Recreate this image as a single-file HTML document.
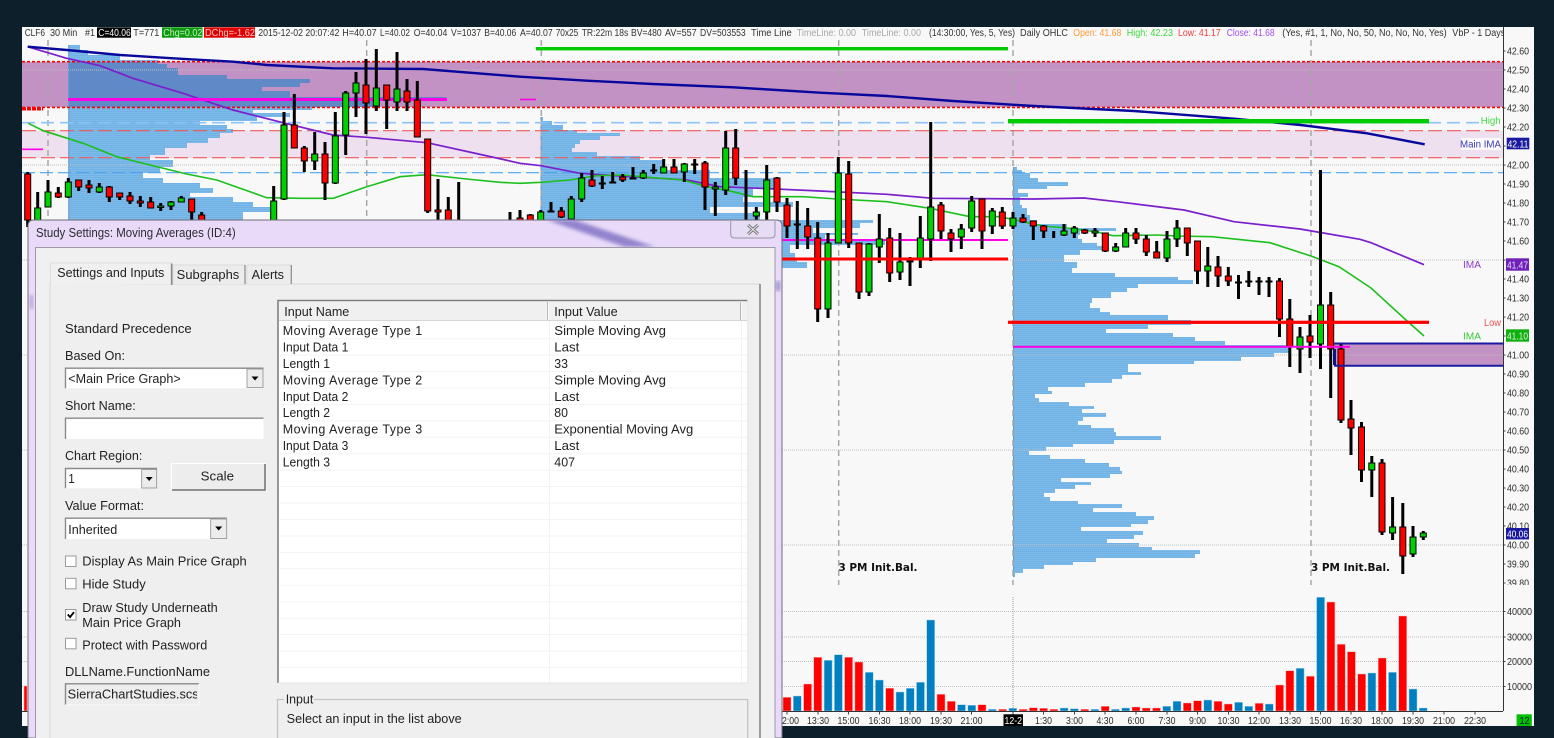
<!DOCTYPE html>
<html><head><meta charset="utf-8"><title>Study Settings</title>
<style>
html,body{margin:0;padding:0;background:#0e1f2c;width:1554px;height:738px;overflow:hidden}
svg{display:block;filter:blur(.35px)}
text{font-family:"Liberation Sans",sans-serif}
.h{font-size:10px;fill:#333}
.a{font-size:10px;fill:#2b2b2b}
.d{font-size:12.5px;fill:#222}
.b{font-family:"DejaVu Sans","Liberation Sans",sans-serif;font-size:11px;font-weight:bold;fill:#111}
</style></head><body>
<svg width="1554" height="738" viewBox="0 0 1554 738" xmlns="http://www.w3.org/2000/svg">
<defs>
<pattern id="st" width="4" height="2" patternUnits="userSpaceOnUse"><rect width="4" height="2" fill="#7dbbea"/><rect y="1" width="4" height="1" fill="#72b1e3"/></pattern>
<clipPath id="z"><rect x="22" y="62" width="1481" height="45"/></clipPath>
<clipPath id="h1"><rect x="22" y="27" width="1481" height="11"/></clipPath>
<clipPath id="sc"><rect x="66" y="684" width="131" height="20"/></clipPath>
<filter id="bl"><feGaussianBlur stdDeviation="1.8"/></filter>
</defs>
<rect width="1554" height="738" fill="#0e1f2c"/>
<rect x="22" y="27" width="1512" height="699" fill="#f8f8f8"/>

<!-- zones -->
<rect x="22" y="62" width="1481" height="45" fill="#c392c4"/>
<rect x="22" y="131" width="1481" height="27" fill="#eee0ee"/>
<rect x="1334" y="344" width="169" height="22" fill="#c392c4"/>

<!-- volume profiles -->
<path id="p0" fill="url(#st)" d="M68.7 45H80V50H88V55H120V60H158V64H167V68H178V75H227V79H310V83H300V87H262V91H290V97H446V101H377V107H312V110H253V113H290V117H257V121H200V125H227V129H233V133H220V138H208V143H187V148H165V155H150V160H173V167H160V173H143V178H163V183H200V188H213V193H190V197H233V202H253V207H270V212H243V226H68.7Z"/>
<path clip-path="url(#z)" fill="#6089c8" d="M68.7 45H80V50H88V55H120V60H158V64H167V68H178V75H227V79H310V83H300V87H262V91H290V97H446V101H377V107H68.7Z"/>
<path fill="url(#st)" d="M541 117H543V121H552V125H563V130H577V133H620V136H600V140H580V144H575V148H572V152H597V156H640V160H665V170H710V178H780V188H753V197H743V202H793V207H710V213H760V220H873V223H860V228H813V233H858V235H825V240H885V245H790V253H795V258H797V262H807V268H541Z"/>
<path fill="url(#st)" d="M1013.5 167H1017V170H1022V173H1030V178H1038V182H1068V186H1047V189H1018V193H1028V197H1020V205H1022V208H1027V215H1030V220H1037V224H1067V228H1116V231H1080V235H1078V239H1082V243H1097V246H1103V250H1080V255H1064V262H1077V268H1072V273H1115V277H1178V280H1193V284H1138V288H1127V292H1111V298H1092V303H1090V308H1100V312H1110V315H1168V320H1191V325H1148V329H1106V333H1173V337H1195V341H1225V345H1290V353H1274V357H1241V361H1194V364H1128V372H1141V375H1122V379H1112V383H1085V387H1048V391H1052V394H1035V398H1039V402H1069V406H1094V409H1082V413H1106V417H1083V421H1078V425H1091V428H1114V432H1116V436H1161V440H1114V444H1073V447H1046V451H1029V455H1050V459H1085V463H1109V467H1120V471H1122V474H1110V478H1061V482H1091V485H1075V489H1055V493H1044V497H1050V501H1078V504H1122V508H1093V512H1136V516H1154V520H1148V524H1131V527H1081V531H1143V535H1134V539H1107V543H1139V547H1152V550H1200V554H1195V558H1096V562H1073V565H1044V569H1023V573H1015V577H1013.5Z"/>
<path stroke="#5b9ad2" stroke-width="1" fill="none" d="M68.7 45V226M541 117V268M1013.5 167V577"/>

<!-- grid -->
<path stroke="#c0c0c0" stroke-width="1" stroke-dasharray="1 1" fill="none" d="M22 70H1503M22 165H1503M22 260H1503M22 355H1503M22 450H1503M22 545H1503M22 611.5H1503M22 637H1503M22 661.5H1503M22 686.5H1503"/>
<path stroke="#a8a8a8" stroke-width="1.5" stroke-dasharray="6 4" fill="none" d="M48 40V585M366.7 40V585M541.3 40V585M838.7 40V585M1013 40V585M1311 40V585"/>
<path stroke="#999" stroke-width="1" stroke-dasharray="1 1" fill="none" d="M1013 597V711"/>

<!-- horizontal level lines -->
<path stroke="#f00" stroke-width="1.6" stroke-dasharray="3 2" fill="none" d="M22 61.7H1503M22 107.4H1503"/>
<path stroke="#f00" stroke-width="3.4" stroke-dasharray="4 1" fill="none" d="M22 108.8H43"/>
<path stroke="#8cc3f8" stroke-width="1.6" stroke-dasharray="13 6" fill="none" d="M22 122.7H1480"/>
<path stroke="#4ea4f0" stroke-width="1.1" stroke-dasharray="13 5" fill="none" d="M22 172.7H1503"/>
<path stroke="#ee5a5a" stroke-width="1.1" stroke-dasharray="14 5" fill="none" d="M22 130.7H1503M22 157.7H1503"/>
<path stroke="#ff00e6" stroke-width="1.6" fill="none" d="M22 149.3H43"/>

<!-- curves -->
<polyline fill="none" stroke="#7a1fcc" stroke-width="1.7" points="27.7,46.7 66.7,58.3 100,65.7 133,78.3 183,93.3 233,110 283,122.7 333,135 367,137.3 427,142.7 483,155 520,163.3 541,165.7 580,173.3 620,176 660,178.3 687,180 720,186.7 760,188.3 820,191 887,194.3 933,198.3 1034,199 1084,198 1117,201.7 1184,210 1234,221.7 1300,229 1360,239.3 1371,242.7 1424,264.7"/>
<polyline fill="none" stroke="#1cc01c" stroke-width="1.6" points="28.3,123.3 43.3,130.7 83.3,143.3 116.7,156.7 150,165 186.7,174 216.7,180 250,191.7 266.7,197.7 300,198.3 333.3,198.3 366.7,186.7 400,176.7 426.7,174.7 466.7,179 500,182.3 520,183.3 541,182.3 570,180 596.7,175.7 623,175 653,177.7 683,180 707,186.7 733,191.7 753,196.7 803,196.7 837,199 887,201.7 930,208.3 970,216.7 1000,216.7 1043,226 1067,228 1097,232 1113,235.7 1157,235 1177,236 1212,236.7 1270,242.7 1311,256 1339,266.7 1371,288 1406,320 1424,336"/>
<polyline fill="none" stroke="#08089c" stroke-width="2.4" points="27.7,46.7 66.7,50 120,55 173,58.3 233,61.7 267,65 333,68.3 423,69 520,76.7 587,80.7 653,84 733,87.3 820,92.7 887,96 953,101 1034,106 1134,111 1234,118.7 1300.7,125 1367,133.3 1424.7,144.3"/>

<!-- horizontal thick lines under candles -->
<rect x="536" y="47" width="472" height="3.4" fill="#00cc00"/>
<rect x="68" y="98" width="379" height="3" fill="#ff00e6"/>
<rect x="520" y="98.7" width="16" height="1.6" fill="#ff00e6"/>
<rect x="1008" y="119" width="421" height="4.4" fill="#00cc00"/>
<rect x="782" y="239" width="226" height="2" fill="#ff00e6"/>

<!-- wicks -->
<path stroke="#000" stroke-width="3" fill="none" d="M27.7 172V227M37.7 192V226M48 180V207M58.3 187V198M68.3 178V198M78.7 180V191M89 180V193M99.3 183V193M109.3 186V202M119.7 193V200M130 192V204M140.3 196V207M150.7 197V208M160.7 203V211M171 201V210M181.3 196V202M191.7 199V226M201.7 212V226M273.7 186V226M284 112V200M294.3 94V148M304.3 146V172M314.7 132V170M325 142V200M335.3 112V184M345.7 91V155M356 72V117M366 59V134M376.3 49V111M386.7 85V129M397 52V111M407 79V111M417.3 81V137M427.7 139V213M438 179V226M448.3 197V226M458.7 182V226M510 212V226M520 210V226M530.3 214V226M540.7 210V226M551 202V212M561.3 207V218M571.3 196V226M581.7 173V202M592 170V187M602.3 176V189M612.7 172V183M622.7 174V182M633 167V179M643.3 170V179M653.7 164V174M663.7 159V173M674 159V173M684.3 163V182M694.7 159V174M705 161V210M715.3 182V216M725.7 131V195M735.7 129V185M746 170V226M756.3 207V226M766.7 165V226M777 177V212M787 198V238M797.3 201V249M807.7 208V249M817.7 222V322M828 233V318M838.3 157V243M848.7 161V248M859 243V299M869 243V296M879.3 214V263M889.7 228V282M900 233V280M910 257V286M920.3 216V268M930.7 122V261M941 202V239M951 229V252M961.3 224V249M971.7 196V232M982 199V249M992.3 208V234M1002.3 207V229M1013 212V229M1023 214V223M1033.3 221V240M1043.7 225V238M1053.7 231V238M1064 224V236M1074.3 226V238M1084.7 229V234M1095 228V237M1105.3 233V252M1115.7 243V252M1125.7 228V247M1136 228V244M1146.3 235V256M1156.7 241V258M1167 231V262M1177 220V247M1187.3 228V256M1197.5 241V284M1207.8 247V287M1218 256V287M1228.3 267V286M1238.5 275V299M1248.8 271V287M1259 277V295M1269 277V297M1279.5 278V337M1289.8 299V367M1300 327V373M1310 315V358M1320.5 170V369M1330.7 292V398M1341 343V423M1351 400V455M1361.5 422V482M1371.8 456V497M1382 459V535M1392.6 497V540M1402.8 503V574M1413 526V557M1423.3 531V540"/>
<!-- red bodies -->
<path fill="#f00" stroke="#000" stroke-width="1" d="M24.7 174h6V220h-6zM55.3 193h6V197h-6zM75.7 180h6V187h-6zM86 185h6V188h-6zM106.3 187h6V197h-6zM116.7 193h6V197h-6zM127 196h6V201h-6zM137.3 201h6V203h-6zM147.7 202h6V208h-6zM188.7 199h6V212h-6zM198.7 215h6V226h-6zM291.3 125h6V148h-6zM301.3 148h6V161h-6zM322 154h6V183h-6zM363 85h6V103h-6zM383.7 85h6V100h-6zM404 91h6V102h-6zM414.3 100h6V137h-6zM424.7 139h6V211h-6zM435 210h6V212h-6zM445.3 210h6V226h-6zM517 218h6V226h-6zM527.3 215h6V226h-6zM558.3 211h6V217h-6zM589 180h6V186h-6zM619.7 177h6V180h-6zM671 167h6V173h-6zM702 163h6V187h-6zM732.7 148h6V178h-6zM774 178h6V202h-6zM784 205h6V226h-6zM804.7 226h6V237h-6zM814.7 238h6V309h-6zM845.7 174h6V243h-6zM856 243h6V292h-6zM886.7 238h6V273h-6zM938 205h6V231h-6zM948 233h6V239h-6zM979 199h6V231h-6zM999.3 212h6V226h-6zM1020 218h6V222h-6zM1030.3 221h6V226h-6zM1040.7 226h6V231h-6zM1081.7 230h6V233h-6zM1102.3 233h6V251h-6zM1133 233h6V239h-6zM1143.3 239h6V252h-6zM1153.7 252h6V258h-6zM1184.3 228h6V243h-6zM1194.5 241h6V271h-6zM1215 267h6V276h-6zM1225.3 276h6V281h-6zM1276.5 281h6V319h-6zM1286.8 319h6V347h-6zM1307 336h6V342h-6zM1327.7 305h6V349h-6zM1338 349h6V420h-6zM1348 419h6V428h-6zM1358.5 427h6V470h-6zM1379 463h6V532h-6zM1399.8 527h6V556h-6z"/>
<!-- green bodies -->
<path fill="#00d000" stroke="#000" stroke-width="1" d="M34.7 208h6V226h-6zM45 192h6V207h-6zM65.3 182h6V197h-6zM96.3 187h6V192h-6zM157.7 206h6V207.5h-6zM168 202h6V206h-6zM178.3 198h6V202h-6zM270.7 201h6V226h-6zM281 125h6V199h-6zM311.7 154h6V161h-6zM332.3 136h6V183h-6zM342.7 93h6V135h-6zM353 83h6V93h-6zM373.3 88h6V106h-6zM394 89h6V102h-6zM537.7 212h6V226h-6zM568.3 199h6V219h-6zM578.7 178h6V199h-6zM640.3 173h6V178h-6zM660.7 167h6V173h-6zM681.3 164h6V172h-6zM753.3 212h6V216h-6zM763.7 180h6V212h-6zM712.3 187h6V189h-6zM722.7 148h6V190h-6zM825 243h6V309h-6zM835.3 173h6V243h-6zM866 244h6V292h-6zM876.3 239h6V247h-6zM897 262h6V272h-6zM917.3 238h6V258h-6zM927.7 207h6V239h-6zM958.3 229h6V237h-6zM968.7 201h6V228h-6zM989.3 211h6V226h-6zM1010 218h6V226h-6zM1061 231h6V235h-6zM1071.3 228h6V233h-6zM1092 231h6V233h-6zM1112.7 247h6V251h-6zM1122.7 233h6V247h-6zM1164 239h6V258h-6zM1174 228h6V239h-6zM1204.8 266h6V271h-6zM1297 337h6V349h-6zM1317.5 305h6V344h-6zM1368.8 463h6V470h-6zM1389.6 527h6V533h-6zM1410 537h6V554h-6zM1420.3 533h6V537h-6zM548 211h6V212h-6zM599.3 183h6V184h-6zM609.7 182h6V183h-6zM630 178h6V179h-6zM650.7 170h6V171h-6zM691.7 164h6V165h-6zM794.3 224h6V225h-6zM907 261h6V262h-6zM1235.5 282h6V283h-6zM1245.8 281h6V282h-6zM1256 281h6V282h-6zM1266 281h6V282h-6z"/>

<!-- thick lines above candles -->
<rect x="782" y="257.5" width="226" height="3" fill="#f00"/>
<rect x="1008" y="320.7" width="421" height="3.2" fill="#f00"/>
<rect x="1013" y="345.8" width="337" height="2" fill="#ff00e6"/>
<path stroke="#1a1aa0" stroke-width="2" fill="none" d="M1334 343.5H1503M1334 365.8H1503"/>
<rect x="1333" y="349" width="3" height="16" fill="#10108c"/>

<!-- volume bars -->
<path fill="#f00" stroke="#ffb0b0" stroke-width=".5" d="M24 686h3V711h-3zM783 697.3h8V711h-8zM803.6 684h8V711h-8zM813.8 657.3h8V711h-8zM844.6 657.3h8V711h-8zM854.9 662h8V711h-8zM885.7 688.3h8V711h-8zM937 694.3h8V711h-8zM947.3 701.3h8V711h-8zM978 704.7h8V711h-8zM998.6 709.3h8V711h-8zM1019.1 709.3h8V711h-8zM1029.4 707.7h8V711h-8zM1039.6 708.3h8V711h-8zM1049.9 709.3h8V711h-8zM1080.7 709.3h8V711h-8zM1101.2 706.3h8V711h-8zM1132 707h8V711h-8zM1142.2 708h8V711h-8zM1152.5 708h8V711h-8zM1183.3 703h8V711h-8zM1193.5 700.7h8V711h-8zM1214 701.3h8V711h-8zM1224.3 704h8V711h-8zM1255.1 703.3h8V711h-8zM1275.6 685h8V711h-8zM1285.9 670.7h8V711h-8zM1306.4 676.3h8V711h-8zM1326.9 602h8V711h-8zM1337.2 644.3h8V711h-8zM1347.4 651.7h8V711h-8zM1357.7 674h8V711h-8zM1378.2 658h8V711h-8zM1398.7 616h8V711h-8z"/>
<path fill="#0080c0" stroke="#a8d4ec" stroke-width=".5" d="M793.3 696h8V711h-8zM824.1 660.3h8V711h-8zM834.4 654.7h8V711h-8zM865.2 672.3h8V711h-8zM875.4 680h8V711h-8zM896 692h8V711h-8zM906.2 688.3h8V711h-8zM916.5 682.3h8V711h-8zM926.7 620h8V711h-8zM957.5 704.7h8V711h-8zM967.8 705.3h8V711h-8zM988.3 709.3h8V711h-8zM1008.8 708.3h8V711h-8zM1060.1 708h8V711h-8zM1070.4 708.7h8V711h-8zM1090.9 709.3h8V711h-8zM1111.4 709.3h8V711h-8zM1121.7 708h8V711h-8zM1162.7 706.3h8V711h-8zM1173 701.3h8V711h-8zM1203.8 700h8V711h-8zM1234.6 702.3h8V711h-8zM1244.8 706.3h8V711h-8zM1265.3 704h8V711h-8zM1296.1 668.3h8V711h-8zM1316.6 597.3h8V711h-8zM1367.9 673h8V711h-8zM1388.5 672.3h8V711h-8zM1409 689h8V711h-8zM1419.2 708h8V711h-8z"/>

<!-- axes -->
<path stroke="#333" stroke-width="1" fill="none" d="M1503.5 27V711M22 711.5H1503"/>
<path stroke="#444" stroke-width="1" fill="none" d="M787 711.5v3M818 711.5v3M848.5 711.5v3M879.5 711.5v3M910 711.5v3M941 711.5v3M971.5 711.5v3M1013 711.5v3M1043.5 711.5v3M1074.5 711.5v3M1105 711.5v3M1136 711.5v3M1167 711.5v3M1197.5 711.5v3M1228.5 711.5v3M1259 711.5v3M1290 711.5v3M1320.5 711.5v3M1351 711.5v3M1382 711.5v3M1413 711.5v3M1444 711.5v3M1475 711.5v3M1503.5 51h2M1503.5 70h2M1503.5 89h2M1503.5 108h2M1503.5 127h2M1503.5 146h2M1503.5 165h2M1503.5 184h2M1503.5 203h2M1503.5 222h2M1503.5 241h2M1503.5 260h2M1503.5 279h2M1503.5 298h2M1503.5 317h2M1503.5 336h2M1503.5 355h2M1503.5 374h2M1503.5 393h2M1503.5 412h2M1503.5 431h2M1503.5 450h2M1503.5 469h2M1503.5 488h2M1503.5 507h2M1503.5 526h2M1503.5 545h2M1503.5 564h2M1503.5 583h2M1503.5 611.5h2M1503.5 637h2M1503.5 661.5h2M1503.5 686.5h2"/>
<g class="a" style="font-size:10px">
<text class="a" x="1507" y="54.5" textLength="22" lengthAdjust="spacingAndGlyphs">42.60</text>
<text class="a" x="1507" y="73.5" textLength="22" lengthAdjust="spacingAndGlyphs">42.50</text>
<text class="a" x="1507" y="92.5" textLength="22" lengthAdjust="spacingAndGlyphs">42.40</text>
<text class="a" x="1507" y="111.5" textLength="22" lengthAdjust="spacingAndGlyphs">42.30</text>
<text class="a" x="1507" y="130.5" textLength="22" lengthAdjust="spacingAndGlyphs">42.20</text>
<text class="a" x="1507" y="168.5" textLength="22" lengthAdjust="spacingAndGlyphs">42.00</text>
<text class="a" x="1507" y="187.5" textLength="22" lengthAdjust="spacingAndGlyphs">41.90</text>
<text class="a" x="1507" y="206.5" textLength="22" lengthAdjust="spacingAndGlyphs">41.80</text>
<text class="a" x="1507" y="225.5" textLength="22" lengthAdjust="spacingAndGlyphs">41.70</text>
<text class="a" x="1507" y="244.5" textLength="22" lengthAdjust="spacingAndGlyphs">41.60</text>
<text class="a" x="1507" y="282.5" textLength="22" lengthAdjust="spacingAndGlyphs">41.40</text>
<text class="a" x="1507" y="301.5" textLength="22" lengthAdjust="spacingAndGlyphs">41.30</text>
<text class="a" x="1507" y="320.5" textLength="22" lengthAdjust="spacingAndGlyphs">41.20</text>
<text class="a" x="1507" y="358.5" textLength="22" lengthAdjust="spacingAndGlyphs">41.00</text>
<text class="a" x="1507" y="377.5" textLength="22" lengthAdjust="spacingAndGlyphs">40.90</text>
<text class="a" x="1507" y="396.5" textLength="22" lengthAdjust="spacingAndGlyphs">40.80</text>
<text class="a" x="1507" y="415.5" textLength="22" lengthAdjust="spacingAndGlyphs">40.70</text>
<text class="a" x="1507" y="434.5" textLength="22" lengthAdjust="spacingAndGlyphs">40.60</text>
<text class="a" x="1507" y="453.5" textLength="22" lengthAdjust="spacingAndGlyphs">40.50</text>
<text class="a" x="1507" y="472.5" textLength="22" lengthAdjust="spacingAndGlyphs">40.40</text>
<text class="a" x="1507" y="491.5" textLength="22" lengthAdjust="spacingAndGlyphs">40.30</text>
<text class="a" x="1507" y="510.5" textLength="22" lengthAdjust="spacingAndGlyphs">40.20</text>
<text class="a" x="1507" y="529.5" textLength="22" lengthAdjust="spacingAndGlyphs">40.10</text>
<text class="a" x="1507" y="548.5" textLength="22" lengthAdjust="spacingAndGlyphs">40.00</text>
<text class="a" x="1507" y="567.5" textLength="22" lengthAdjust="spacingAndGlyphs">39.90</text>
<text class="a" x="1507" y="586.5" textLength="22" lengthAdjust="spacingAndGlyphs">39.80</text>
</g>
<rect x="1505" y="585" width="29" height="10" fill="#f8f8f8"/>
<text class="a" x="1507" y="615" textLength="25" lengthAdjust="spacingAndGlyphs">40000</text>
<text class="a" x="1507" y="640.5" textLength="25" lengthAdjust="spacingAndGlyphs">30000</text>
<text class="a" x="1507" y="665" textLength="25" lengthAdjust="spacingAndGlyphs">20000</text>
<text class="a" x="1507" y="690" textLength="25" lengthAdjust="spacingAndGlyphs">10000</text>

<!-- price boxes -->
<rect x="1461" y="138" width="40" height="12" fill="#fff" opacity=".8"/>
<text x="1460" y="147.5" font-size="10.5" fill="#3a3ab4" textLength="41" lengthAdjust="spacingAndGlyphs">Main IMA</text>
<rect x="1506.7" y="137.7" width="22.6" height="11.6" fill="#1a1aa0"/>
<text x="1507.5" y="147.3" font-size="10" fill="#fff" textLength="21" lengthAdjust="spacingAndGlyphs">42.11</text>
<text x="1480.7" y="124" font-size="10.5" fill="#44dd44" textLength="20" lengthAdjust="spacingAndGlyphs">High</text>
<text x="1463" y="268" font-size="10.5" fill="#8a3ad0" textLength="18" lengthAdjust="spacingAndGlyphs">IMA</text>
<rect x="1506" y="258.3" width="23" height="12.4" fill="#7020b8"/>
<text x="1507" y="268.3" font-size="10" fill="#e8dcff" textLength="21" lengthAdjust="spacingAndGlyphs">41.47</text>
<text x="1484" y="326" font-size="10.5" fill="#ee5050" textLength="17" lengthAdjust="spacingAndGlyphs">Low</text>
<text x="1463" y="339.5" font-size="10.5" fill="#38c838" textLength="18" lengthAdjust="spacingAndGlyphs">IMA</text>
<rect x="1506" y="329.3" width="23" height="12.4" fill="#10b010"/>
<text x="1507" y="339.3" font-size="10" fill="#dcf5dc" textLength="21" lengthAdjust="spacingAndGlyphs">41.10</text>
<rect x="1506" y="528" width="23" height="11.4" fill="#1a1aa0"/>
<text x="1507" y="537.5" font-size="10" fill="#fff" textLength="21" lengthAdjust="spacingAndGlyphs">40.06</text>

<text class="b" x="838.5" y="571" textLength="79" lengthAdjust="spacingAndGlyphs">3 PM Init.Bal.</text>
<text class="b" x="1311" y="571" textLength="79" lengthAdjust="spacingAndGlyphs">3 PM Init.Bal.</text>

<!-- time labels -->
<text class="a" x="782" y="724" textLength="17" lengthAdjust="spacingAndGlyphs">2:00</text>
<text class="a" x="807" y="724" textLength="22" lengthAdjust="spacingAndGlyphs">13:30</text>
<text class="a" x="837.5" y="724" textLength="22" lengthAdjust="spacingAndGlyphs">15:00</text>
<text class="a" x="868.5" y="724" textLength="22" lengthAdjust="spacingAndGlyphs">16:30</text>
<text class="a" x="899" y="724" textLength="22" lengthAdjust="spacingAndGlyphs">18:00</text>
<text class="a" x="930" y="724" textLength="22" lengthAdjust="spacingAndGlyphs">19:30</text>
<text class="a" x="960.5" y="724" textLength="22" lengthAdjust="spacingAndGlyphs">21:00</text>
<rect x="1003.5" y="714.3" width="19.5" height="11.7" fill="#000"/>
<text x="1004.5" y="724" font-size="10" fill="#fff" textLength="17.5" lengthAdjust="spacingAndGlyphs">12-2</text>
<text class="a" x="1035" y="724" textLength="17" lengthAdjust="spacingAndGlyphs">1:30</text>
<text class="a" x="1066" y="724" textLength="17" lengthAdjust="spacingAndGlyphs">3:00</text>
<text class="a" x="1096.5" y="724" textLength="17" lengthAdjust="spacingAndGlyphs">4:30</text>
<text class="a" x="1127.5" y="724" textLength="17" lengthAdjust="spacingAndGlyphs">6:00</text>
<text class="a" x="1158.5" y="724" textLength="17" lengthAdjust="spacingAndGlyphs">7:30</text>
<text class="a" x="1189" y="724" textLength="17" lengthAdjust="spacingAndGlyphs">9:00</text>
<text class="a" x="1217.5" y="724" textLength="22" lengthAdjust="spacingAndGlyphs">10:30</text>
<text class="a" x="1248" y="724" textLength="22" lengthAdjust="spacingAndGlyphs">12:00</text>
<text class="a" x="1279" y="724" textLength="22" lengthAdjust="spacingAndGlyphs">13:30</text>
<text class="a" x="1309.5" y="724" textLength="22" lengthAdjust="spacingAndGlyphs">15:00</text>
<text class="a" x="1340" y="724" textLength="22" lengthAdjust="spacingAndGlyphs">16:30</text>
<text class="a" x="1371" y="724" textLength="22" lengthAdjust="spacingAndGlyphs">18:00</text>
<text class="a" x="1402" y="724" textLength="22" lengthAdjust="spacingAndGlyphs">19:30</text>
<text class="a" x="1433" y="724" textLength="22" lengthAdjust="spacingAndGlyphs">21:00</text>
<text class="a" x="1464" y="724" textLength="22" lengthAdjust="spacingAndGlyphs">22:30</text>
<rect x="1516.6" y="714.3" width="15.2" height="11.7" fill="#00c000"/>
<text x="1519.5" y="724" font-size="10" fill="#114" textLength="10" lengthAdjust="spacingAndGlyphs">12</text>

<!-- header -->
<rect x="22" y="27" width="1481" height="11" fill="#f8f8f8"/>
<rect x="97" y="27.3" width="34" height="10.4" fill="#000"/>
<rect x="162" y="27.3" width="40.5" height="10.4" fill="#0a9a0a"/>
<rect x="204" y="27.3" width="51" height="10.4" fill="#e00000"/>
<g clip-path="url(#h1)">
<text class="h" x="24.7" y="36" textLength="20.3" lengthAdjust="spacingAndGlyphs">CLF6</text>
<text class="h" x="50" y="36" textLength="27.3" lengthAdjust="spacingAndGlyphs">30 Min</text>
<text class="h" x="85" y="36" textLength="10" lengthAdjust="spacingAndGlyphs">#1</text>
<text x="98.3" y="36" font-size="10" fill="#fff" textLength="32.4" lengthAdjust="spacingAndGlyphs">C=40.06</text>
<text class="h" x="133.3" y="36" textLength="26" lengthAdjust="spacingAndGlyphs">T=771</text>
<text x="163.3" y="36" font-size="10" fill="#c8f0c8" textLength="39" lengthAdjust="spacingAndGlyphs">Chg=0.02</text>
<text x="205" y="36" font-size="10" fill="#ffc8c8" textLength="50" lengthAdjust="spacingAndGlyphs">DChg=-1.62</text>
<text class="h" x="258.3" y="36" textLength="81" lengthAdjust="spacingAndGlyphs">2015-12-02 20:07:42</text>
<text class="h" x="342.3" y="36" textLength="34.4" lengthAdjust="spacingAndGlyphs">H=40.07</text>
<text class="h" x="380" y="36" textLength="30" lengthAdjust="spacingAndGlyphs">L=40.02</text>
<text class="h" x="413.7" y="36" textLength="33.6" lengthAdjust="spacingAndGlyphs">O=40.04</text>
<text class="h" x="451" y="36" textLength="30" lengthAdjust="spacingAndGlyphs">V=1037</text>
<text class="h" x="484.3" y="36" textLength="32" lengthAdjust="spacingAndGlyphs">B=40.06</text>
<text class="h" x="520" y="36" textLength="32.7" lengthAdjust="spacingAndGlyphs">A=40.07</text>
<text class="h" x="555.7" y="36" textLength="22.6" lengthAdjust="spacingAndGlyphs">70x25</text>
<text class="h" x="581.7" y="36" textLength="46.6" lengthAdjust="spacingAndGlyphs">TR:22m 18s</text>
<text class="h" x="631" y="36" textLength="30.7" lengthAdjust="spacingAndGlyphs">BV=480</text>
<text class="h" x="665" y="36" textLength="31.7" lengthAdjust="spacingAndGlyphs">AV=557</text>
<text class="h" x="700" y="36" textLength="45.7" lengthAdjust="spacingAndGlyphs">DV=503553</text>
<text class="h" x="751" y="36" textLength="40.7" lengthAdjust="spacingAndGlyphs">Time Line</text>
<text x="796.7" y="36" font-size="10" fill="#a8a8a8" textLength="59.3" lengthAdjust="spacingAndGlyphs">TimeLine: 0.00</text>
<text x="861.7" y="36" font-size="10" fill="#a8a8a8" textLength="59.3" lengthAdjust="spacingAndGlyphs">TimeLine: 0.00</text>
<text class="h" x="929" y="36" textLength="86" lengthAdjust="spacingAndGlyphs">(14:30:00, Yes, 5, Yes)</text>
<text class="h" x="1020" y="36" textLength="48" lengthAdjust="spacingAndGlyphs">Daily OHLC</text>
<text x="1073.3" y="36" font-size="10" fill="#ff9a3c" textLength="48" lengthAdjust="spacingAndGlyphs">Open: 41.68</text>
<text x="1126.7" y="36" font-size="10" fill="#3ed83e" textLength="46.3" lengthAdjust="spacingAndGlyphs">High: 42.23</text>
<text x="1178" y="36" font-size="10" fill="#f03c3c" textLength="42.7" lengthAdjust="spacingAndGlyphs">Low: 41.17</text>
<text x="1226.7" y="36" font-size="10" fill="#a050f0" textLength="48" lengthAdjust="spacingAndGlyphs">Close: 41.68</text>
<text class="h" x="1282.3" y="36" textLength="164.4" lengthAdjust="spacingAndGlyphs">(Yes, #1, 1, No, No, 50, No, No, No, Yes)</text>
<text class="h" x="1452.3" y="36" textLength="53" lengthAdjust="spacingAndGlyphs">VbP - 1 Days</text>
</g>

<!-- dark bottom band (below chart, covers nothing of dialog) -->
<rect x="0" y="726" width="1554" height="12" fill="#0e1f2c"/>

<!-- dialog window -->
<path d="M28 738V226q0-6 6-6H776q6 0 6 6V738Z" fill="#e8daf8" stroke="#6e6e78" stroke-width="1"/>
<polygon points="547,220 575,220 655,247 625,247" fill="#8474c6" opacity=".85" filter="url(#bl)"/>
<rect x="775.5" y="281" width="5" height="10" fill="#a595d8" filter="url(#bl)"/>
<rect x="29.5" y="295" width="4" height="14" fill="#b8a8dc" filter="url(#bl)"/>
<path d="M730.7 221V234q0 4 4 4H771q4 0 4-4V221" fill="#e6dcf4" stroke="#9a94a8" stroke-width="1"/>
<path d="M748 225l10 9M758 225l-10 9" stroke="#777" stroke-width="3" fill="none"/>
<path d="M748 225l10 9M758 225l-10 9" stroke="#e8e8e8" stroke-width="1" fill="none"/>
<text x="36" y="237" font-size="12.5" fill="#2c2c34" textLength="199.7" lengthAdjust="spacingAndGlyphs">Study Settings: Moving Averages (ID:4)</text>

<!-- client -->
<rect x="35.5" y="247.5" width="739.5" height="491" fill="#f0f0f0" stroke="#9c98a8" stroke-width="1"/>
<!-- tab page -->
<rect x="50" y="284" width="710" height="455" fill="#efefef"/>
<path d="M50 738V284H172M172 284H760" stroke="#dcdcdc" stroke-width="1.2" fill="none"/>
<path d="M760 284V738" stroke="#868686" stroke-width="1.6" fill="none"/>
<!-- tabs -->
<path d="M50.5 285V265q0-2 2-2H171V284" fill="#f0f0f0" stroke="#dcdcdc" stroke-width="1"/>
<path d="M171.7 263.5V285" stroke="#888" stroke-width="1.5" fill="none"/>
<path d="M173 284V265H245V284" fill="#ececec" stroke="#dcdcdc" stroke-width="1"/>
<path d="M245 265V284" stroke="#909090" stroke-width="1.3" fill="none"/>
<path d="M247 284V265H291V284" fill="#ececec" stroke="#dcdcdc" stroke-width="1"/>
<path d="M291.3 265V284" stroke="#909090" stroke-width="1.3" fill="none"/>
<text class="d" x="57.3" y="277" textLength="107" lengthAdjust="spacingAndGlyphs">Settings and Inputs</text>
<text class="d" x="176.7" y="279" textLength="62.6" lengthAdjust="spacingAndGlyphs">Subgraphs</text>
<text class="d" x="251.7" y="279" textLength="32.3" lengthAdjust="spacingAndGlyphs">Alerts</text>

<!-- list -->
<rect x="277.5" y="300" width="470" height="383" fill="#fff"/>
<path d="M278 683V300.5H747.5" stroke="#808080" stroke-width="1.6" fill="none"/>
<path d="M747.7 300V683H278" stroke="#e4e4e4" stroke-width="1" fill="none"/>
<rect x="279" y="301.5" width="468" height="19" fill="#f0f0f0"/>
<path d="M547.7 302V320M740.5 302V320" stroke="#b0b0b0" stroke-width="1" fill="none"/>
<path d="M548.5 302V320M741.3 302V320" stroke="#fff" stroke-width=".8" fill="none"/>
<path d="M279 320.5H747" stroke="#d6d6d6" stroke-width="1" fill="none"/>
<path d="M549.5 321V683M741.5 321V683" stroke="#f2f2f2" stroke-width="1" fill="none"/>
<path stroke="#f3f3f3" stroke-width="1" fill="none" d="M279 338.7H747M279 355.1H747M279 371.6H747M279 388H747M279 404.4H747M279 420.9H747M279 437.3H747M279 453.8H747M279 470.2H747M279 486.6H747M279 503.1H747M279 519.5H747M279 536H747M279 552.4H747M279 568.8H747M279 585.3H747M279 601.7H747M279 618.2H747M279 634.6H747M279 651H747M279 667.5H747"/>
<text class="d" x="284.3" y="316" textLength="65" lengthAdjust="spacingAndGlyphs">Input Name</text>
<text class="d" x="554.3" y="316" textLength="63.4" lengthAdjust="spacingAndGlyphs">Input Value</text>
<text class="d" x="282.7" y="335" textLength="139.5" lengthAdjust="spacing">Moving Average Type 1</text>
<text class="d" x="282.7" y="351.4" textLength="65.6" lengthAdjust="spacingAndGlyphs">Input Data 1</text>
<text class="d" x="282.7" y="367.9" textLength="47.3" lengthAdjust="spacingAndGlyphs">Length 1</text>
<text class="d" x="282.7" y="384.3" textLength="139.5" lengthAdjust="spacing">Moving Average Type 2</text>
<text class="d" x="282.7" y="400.8" textLength="65.6" lengthAdjust="spacingAndGlyphs">Input Data 2</text>
<text class="d" x="282.7" y="417.2" textLength="47.3" lengthAdjust="spacingAndGlyphs">Length 2</text>
<text class="d" x="282.7" y="433.6" textLength="139.5" lengthAdjust="spacing">Moving Average Type 3</text>
<text class="d" x="282.7" y="450.1" textLength="65.6" lengthAdjust="spacingAndGlyphs">Input Data 3</text>
<text class="d" x="282.7" y="466.5" textLength="47.3" lengthAdjust="spacingAndGlyphs">Length 3</text>
<text class="d" x="554.3" y="335" textLength="111.7" lengthAdjust="spacingAndGlyphs">Simple Moving Avg</text>
<text class="d" x="554.3" y="351.4" textLength="25" lengthAdjust="spacingAndGlyphs">Last</text>
<text class="d" x="554.3" y="367.9" textLength="13.7" lengthAdjust="spacingAndGlyphs">33</text>
<text class="d" x="554.3" y="384.3" textLength="111.7" lengthAdjust="spacingAndGlyphs">Simple Moving Avg</text>
<text class="d" x="554.3" y="400.8" textLength="25" lengthAdjust="spacingAndGlyphs">Last</text>
<text class="d" x="554.3" y="417.2" textLength="13.7" lengthAdjust="spacingAndGlyphs">80</text>
<text class="d" x="554.3" y="433.6" textLength="139" lengthAdjust="spacingAndGlyphs">Exponential Moving Avg</text>
<text class="d" x="554.3" y="450.1" textLength="25" lengthAdjust="spacingAndGlyphs">Last</text>
<text class="d" x="554.3" y="466.5" textLength="20.7" lengthAdjust="spacingAndGlyphs">407</text>

<!-- left column -->
<text class="d" x="65" y="333" textLength="126.7" lengthAdjust="spacingAndGlyphs">Standard Precedence</text>
<text class="d" x="65" y="360" textLength="60" lengthAdjust="spacingAndGlyphs">Based On:</text>
<rect x="65" y="367.7" width="198.5" height="20.6" fill="#fff"/>
<path d="M65.5 388.3V368.2H263.5" stroke="#8a8a8a" stroke-width="1.4" fill="none"/>
<rect x="247" y="369" width="16" height="18.5" fill="#ececec" stroke="#8f8f8f" stroke-width=".8"/>
<path d="M251.5 376.5h7l-3.5 4z" fill="#000"/>
<text class="d" x="68.3" y="383" textLength="112.4" lengthAdjust="spacingAndGlyphs">&lt;Main Price Graph&gt;</text>

<text class="d" x="65" y="410" textLength="70.7" lengthAdjust="spacingAndGlyphs">Short Name:</text>
<rect x="65" y="417.7" width="198.5" height="21.3" fill="#fff"/>
<path d="M65.5 439V418.2H263.5" stroke="#8a8a8a" stroke-width="1.4" fill="none"/>

<text class="d" x="65" y="460" textLength="77.3" lengthAdjust="spacingAndGlyphs">Chart Region:</text>
<rect x="65" y="468" width="92" height="20.3" fill="#fff"/>
<path d="M65.5 488.3V468.5H157" stroke="#8a8a8a" stroke-width="1.4" fill="none"/>
<rect x="141.7" y="469.5" width="15" height="18.5" fill="#ececec" stroke="#8f8f8f" stroke-width=".8"/>
<path d="M145.7 477h7l-3.5 4z" fill="#000"/>
<text class="d" x="68.3" y="483" textLength="6.5" lengthAdjust="spacingAndGlyphs">1</text>
<rect x="171.5" y="463.5" width="93.5" height="26.5" fill="#ededed" stroke="#fff" stroke-width="1"/>
<path d="M172 490H265V464" stroke="#707070" stroke-width="1.5" fill="none"/>
<text class="d" x="200.7" y="480.5" textLength="33.3" lengthAdjust="spacingAndGlyphs">Scale</text>

<text class="d" x="65" y="510" textLength="79" lengthAdjust="spacingAndGlyphs">Value Format:</text>
<rect x="65" y="517.7" width="161.7" height="21.3" fill="#fff"/>
<path d="M65.5 539V518.2H226.7" stroke="#8a8a8a" stroke-width="1.4" fill="none"/>
<rect x="210.7" y="519" width="16" height="19.5" fill="#ececec" stroke="#8f8f8f" stroke-width=".8"/>
<path d="M215.2 526.5h7l-3.5 4z" fill="#000"/>
<text class="d" x="68.3" y="534" textLength="49" lengthAdjust="spacingAndGlyphs">Inherited</text>

<g fill="#fff" stroke="#9a9a9a" stroke-width="1">
<rect x="65.5" y="556" width="10.5" height="10.5"/>
<rect x="65.5" y="578.3" width="10.5" height="10.5"/>
<rect x="65.5" y="609.5" width="10.5" height="10.5"/>
<rect x="65.5" y="638.3" width="10.5" height="10.5"/>
</g>
<path d="M67.8 614.5l2.3 2.6 3.9-5" stroke="#000" stroke-width="1.8" fill="none"/>
<text class="d" x="82.3" y="565.5" textLength="164.4" lengthAdjust="spacingAndGlyphs">Display As Main Price Graph</text>
<text class="d" x="82.3" y="588.5" textLength="63.4" lengthAdjust="spacingAndGlyphs">Hide Study</text>
<text class="d" x="82.3" y="612" textLength="135.4" lengthAdjust="spacingAndGlyphs">Draw Study Underneath</text>
<text class="d" x="82.3" y="627" textLength="98.7" lengthAdjust="spacingAndGlyphs">Main Price Graph</text>
<text class="d" x="82.3" y="649.5" textLength="125" lengthAdjust="spacingAndGlyphs">Protect with Password</text>
<text class="d" x="65" y="676" textLength="145" lengthAdjust="spacingAndGlyphs">DLLName.FunctionName</text>
<rect x="65" y="683.3" width="134" height="21.7" fill="#ededed"/>
<path d="M65.5 705V683.8H199" stroke="#8a8a8a" stroke-width="1.4" fill="none"/>
<path d="M199 684V705H65" stroke="#fafafa" stroke-width="1" fill="none"/>
<g clip-path="url(#sc)"><text class="d" x="67.7" y="698.5" textLength="131" lengthAdjust="spacingAndGlyphs">SierraChartStudies.scs</text></g>

<!-- Input group -->
<path d="M284 699.5H277.5V738M314 699.5H747.7V738" stroke="#c4c4c4" stroke-width="1.3" fill="none"/>
<text class="d" x="285.7" y="703.5" textLength="27.6" lengthAdjust="spacingAndGlyphs">Input</text>
<text class="d" x="286.7" y="723" textLength="175" lengthAdjust="spacingAndGlyphs">Select an input in the list above</text>
</svg>
</body></html>
